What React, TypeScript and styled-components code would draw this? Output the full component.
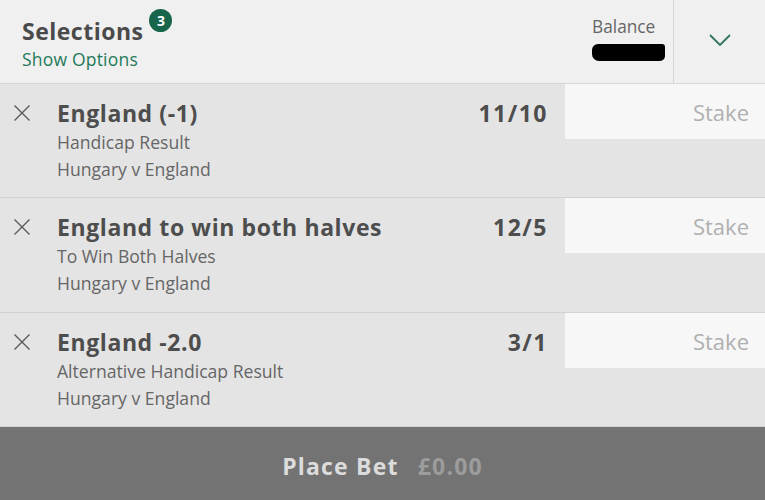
import React from 'react'
import styled, { createGlobalStyle } from 'styled-components'

type Selection = {
  id: number
  name: string
  market: string
  event: string
  odds: string
}

const selections: Selection[] = [
  { id: 1, name: 'England (-1)', market: 'Handicap Result', event: 'Hungary v England', odds: '11/10' },
  { id: 2, name: 'England to win both halves', market: 'To Win Both Halves', event: 'Hungary v England', odds: '12/5' },
  { id: 3, name: 'England -2.0', market: 'Alternative Handicap Result', event: 'Hungary v England', odds: '3/1' },
]

const GlobalStyle = createGlobalStyle`
  html, body {
    margin: 0;
    padding: 0;
    background: #e4e4e4;
  }
  body {
    font-family: 'Open Sans', 'Noto Sans', 'Liberation Sans', sans-serif;
  }
`

const CloseIcon = () => (
  <svg width="18" height="18" viewBox="0 0 18 18" fill="none">
    <path d="M1.5 1.5l15 15M16.5 1.5l-15 15" stroke="#5a5a5a" strokeWidth="1.4" />
  </svg>
)

const ChevronIcon = () => (
  <svg width="22" height="12" viewBox="0 0 22 12" fill="none">
    <path d="M1 1l10 10L21 1" stroke="#2d7560" strokeWidth="1.8" />
  </svg>
)

export default function App() {
  return (
    <>
      <GlobalStyle />
      <Slip>
        <Header>
          <HeaderMain>
            <TitleLine>
              <Title>Selections</Title>
              <Badge>3</Badge>
            </TitleLine>
            <OptionsLink>Show Options</OptionsLink>
          </HeaderMain>
          <Balance>
            <BalanceLabel>Balance</BalanceLabel>
            <Redacted />
          </Balance>
          <Toggle>
            <ChevronIcon />
          </Toggle>
        </Header>
        <List>
          {selections.map((s) => (
            <Row key={s.id}>
              <RemoveButton>
                <CloseIcon />
              </RemoveButton>
              <Info>
                <Name>{s.name}</Name>
                <Detail>{s.market}</Detail>
                <Detail>{s.event}</Detail>
              </Info>
              <Odds>{s.odds}</Odds>
              <StakeBox>Stake</StakeBox>
            </Row>
          ))}
        </List>
        <Footer>
          <PlaceLabel>Place Bet</PlaceLabel>
          <Total>£0.00</Total>
        </Footer>
      </Slip>
    </>
  )
}

const Slip = styled.div`
  width: 765px;
  height: 500px;
  display: flex;
  flex-direction: column;
  overflow: hidden;
`
const Header = styled.header`
  height: 83px;
  flex: none;
  display: flex;
  background: #f0f0f0;
  border-bottom: 1px solid #d6d6d6;
`
const HeaderMain = styled.div`
  flex: 1;
  padding: 15px 0 0 22px;
`
const TitleLine = styled.div`
  display: flex;
  align-items: flex-start;
`
const Title = styled.span`
  font-size: 23px;
  font-weight: 700;
  color: #4a4a4a;
  line-height: 32px;
  letter-spacing: 0.5px;
`
const Badge = styled.span`
  position: relative;
  top: -6px;
  margin-left: 6px;
  width: 23px;
  height: 23px;
  border-radius: 50%;
  background: #17654b;
  color: #fff;
  font-size: 14px;
  font-weight: 700;
  display: flex;
  align-items: center;
  justify-content: center;
`
const OptionsLink = styled.div`
  font-size: 17.5px;
  color: #1f7a5a;
  line-height: 24px;
  letter-spacing: 0.2px;
`
const Balance = styled.div`
  width: 81px;
  padding-top: 16px;
  display: flex;
  flex-direction: column;
`
const BalanceLabel = styled.span`
  font-size: 17.3px;
  color: #666;
  line-height: 22px;
`
const Redacted = styled.span`
  margin-top: 6px;
  width: 73px;
  height: 17px;
  background: #000;
  border-radius: 6px 3px 5px 7px;
`
const Toggle = styled.div`
  width: 91px;
  border-left: 1px solid #d6d6d6;
  display: flex;
  align-items: center;
  justify-content: center;
  padding-bottom: 4px;
`
const List = styled.div`
  display: flex;
  flex-direction: column;
`
const Row = styled.div`
  height: 114px;
  box-sizing: border-box;
  display: grid;
  grid-template-columns: 57px 1fr auto 200px;
  background: #e4e4e4;
  border-bottom: 1px solid #d2d2d2;

  &:nth-child(2) {
    height: 115px;
  }
`
const RemoveButton = styled.div`
  padding: 20px 0 0 13px;
`
const Info = styled.div`
  padding-top: 13px;
  display: flex;
  flex-direction: column;
`
const Name = styled.span`
  font-size: 23px;
  font-weight: 700;
  color: #4d4d4d;
  line-height: 32px;
  letter-spacing: 0.6px;
`
const Detail = styled.span`
  font-size: 17.6px;
  color: #666;
  line-height: 27px;
`
const Odds = styled.span`
  padding: 13px 17px 0 0;
  font-size: 23px;
  font-weight: 700;
  color: #4d4d4d;
  line-height: 32px;
  letter-spacing: 1.5px;
`
const StakeBox = styled.div`
  height: 55px;
  background: #f7f7f7;
  display: flex;
  align-items: center;
  justify-content: flex-end;
  padding-right: 16px;
  font-size: 22px;
  color: #b0b0b0;
`
const Footer = styled.footer`
  flex: 1;
  background: #737373;
  display: flex;
  align-items: center;
  justify-content: center;
  gap: 19px;
  font-size: 23px;
  font-weight: 700;
  letter-spacing: 1.2px;
  padding-top: 4px;
`
const PlaceLabel = styled.span`
  color: #dcdcdc;
`
const Total = styled.span`
  color: #9c9c9c;
`
